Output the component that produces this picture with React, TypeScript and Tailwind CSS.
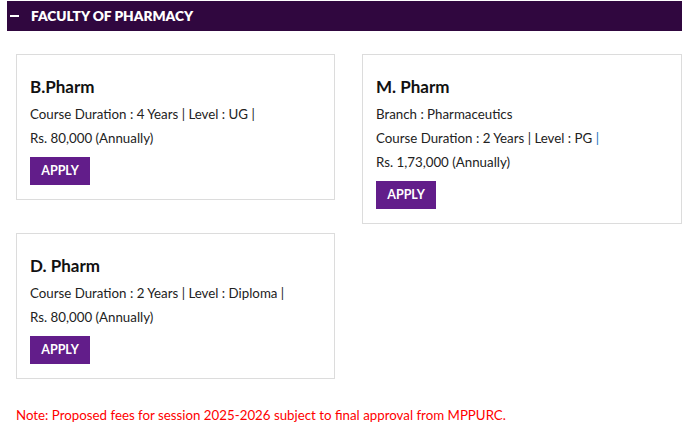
const courses = [
  {
    name: "B.Pharm",
    lines: [["Course Duration : 4 Years | Level : UG |"]],
    fee: "Rs. 80,000 (Annually)",
  },
  {
    name: "M. Pharm",
    branch: "Branch : Pharmaceutics",
    lines: [["Course Duration : 2 Years | Level : PG ", "|"]],
    fee: "Rs. 1,73,000 (Annually)",
  },
  {
    name: "D. Pharm",
    lines: [["Course Duration : 2 Years | Level : Diploma |"]],
    fee: "Rs. 80,000 (Annually)",
  },
];

const CourseCard = ({ c }: { c: (typeof courses)[number] }) => {
  return (
    <div className="border border-[#dcdcdc] bg-white pt-[20px] pb-[14px] px-[13px]">
      <h3 className="text-[17px] leading-[24px] font-bold text-[#111] mb-[3px]">{c.name}</h3>
      {c.branch && <p className="text-[13.3px] leading-[24px] text-[#222]">{c.branch}</p>}
      {c.lines.map((l, i) => (
        <p key={i} className="text-[13.3px] leading-[24px] text-[#222]">
          {l[0]}
          {l[1] && <span className="text-[#1e73be]">{l[1]}</span>}
        </p>
      ))}
      <p className="text-[13.3px] leading-[24px] text-[#222]">{c.fee}</p>
      <button className="mt-[7px] h-[28px] w-[60px] bg-[#621d8a] text-white text-[12.5px] font-bold">
        APPLY
      </button>
    </div>
  );
};

export default function App() {
  return (
    <div className="w-[684px] h-[433px] bg-white font-['Lato','Liberation_Sans',sans-serif] pt-[1px] pl-[7px] pr-[2px]">
      <div className="h-[30px] bg-[#30073f] flex items-center gap-[12px] pl-[3px]">
        <span className="w-[9px] h-[2px] bg-white" />
        <span className="text-white text-[13.7px] font-extrabold">FACULTY OF PHARMACY</span>
      </div>
      <div className="ml-[9px] mt-[23px] grid grid-cols-[319px_320px] gap-x-[27px] gap-y-[9px] items-start">
        <CourseCard c={courses[0]} />
        <CourseCard c={courses[1]} />
        <CourseCard c={courses[2]} />
      </div>
      <p className="ml-[9px] mt-[27px] text-[13.3px] text-[#ff0000]">
        Note: Proposed fees for session 2025-2026 subject to final approval from MPPURC.
      </p>
    </div>
  );
}
